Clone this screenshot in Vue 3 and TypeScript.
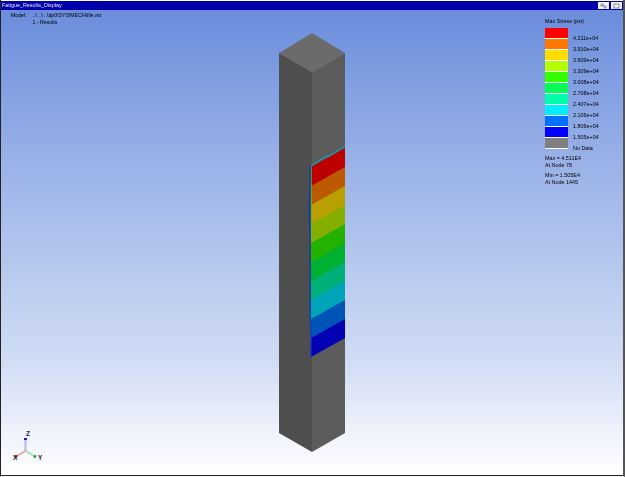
<template>
  <div class="window">
    <div class="titlebar">
      <span class="title">Fatigue_Results_Display</span>
      <div class="title-buttons">
        <button class="win-btn">
          <svg width="9" height="6" viewBox="0 0 9 6"><path d="M2 1h2v2H2zM5 3h2v2H5zM4 2l1 1" fill="none" stroke="#778" stroke-width="0.8" /></svg>
        </button>
        <button class="win-btn">
          <svg width="9" height="6" viewBox="0 0 9 6"><rect x="2" y="1" width="5" height="4" fill="none" stroke="#778" stroke-width="0.8" /></svg>
        </button>
      </div>
    </div>

    <div class="viewport">
      <div class="model-info">
        <span>Model:</span>
        <div>
          <div>..\ ..\ ..\dp0\SYS\MECH\file.rst</div>
          <div>1 - Results</div>
        </div>
      </div>

      <svg class="scene" width="625" height="466" viewBox="0 10 625 466">
        <!-- column -->
        <polygon points="312,33 345,53 312,72 279,53" fill="#6b6b6b" />
        <polygon points="279,53 312,72 312,452 279,433" fill="#4e4e4e" />
        <polygon points="312,72 345,53 345,433 312,452" fill="#5c5c5c" />

        <!-- stress bands on the right face -->
        <polygon v-for="(band, i) in bands" :key="i" :points="bandPoints(i)" :fill="band" />

        <!-- rim along the cut edge -->
        <path d="M345 146 L329 156 L325 157 L311 166" fill="none" stroke="#0f9fb0" stroke-width="1.4" />
        <path d="M310 166 L310 190 L309 200 L310 240 L310 320 L311 330 L311 357" fill="none" stroke="#0a3cc0" stroke-width="1.2" />
        <path d="M311.5 167 L311.5 240" fill="none" stroke="#3cc83c" stroke-width="0.7" />

        <!-- axis triad -->
        <line x1="25.5" y1="451" x2="25.5" y2="440" stroke="#b4b4ec" stroke-width="2" />
        <line x1="25.5" y1="440" x2="25.5" y2="438" stroke="#1c1ccc" stroke-width="3" />
        <line x1="25.5" y1="451" x2="17" y2="456" stroke="#f0a0a0" stroke-width="1.5" />
        <line x1="17" y1="456" x2="15" y2="457" stroke="#d81c1c" stroke-width="3" />
        <line x1="25.5" y1="451" x2="34" y2="456" stroke="#a0e0a0" stroke-width="1.5" />
        <line x1="34" y1="456" x2="36" y2="457" stroke="#14a814" stroke-width="3" />
        <text x="26" y="436" class="axis-label">Z</text>
        <text x="13" y="460" class="axis-label">X</text>
        <text x="38" y="460" class="axis-label">Y</text>
      </svg>

      <div class="legend">
        <div class="legend-title">Max Stress (psi)</div>
        <div v-for="row in legendRows" :key="row.label" class="legend-row">
          <div class="swatch" :style="{ background: row.color }"></div>
          <span class="legend-value">{{ row.label }}</span>
        </div>
        <div class="stats first">
          <div>Max = 4.511E4</div>
          <div>At Node 78</div>
        </div>
        <div class="stats">
          <div>Min = 1.505E4</div>
          <div>At Node 1445</div>
        </div>
      </div>
    </div>
  </div>
</template>

<script setup lang="ts">
interface LegendRow {
  color: string;
  label: string;
}

const legendRows: LegendRow[] = [
  { color: '#ff0000', label: '4.211e+04' },
  { color: '#ff7800', label: '3.910e+04' },
  { color: '#ffdc00', label: '3.609e+04' },
  { color: '#b4ff00', label: '3.309e+04' },
  { color: '#32ff00', label: '3.008e+04' },
  { color: '#00ff55', label: '2.708e+04' },
  { color: '#00ffaa', label: '2.407e+04' },
  { color: '#00eeff', label: '2.106e+04' },
  { color: '#0070ff', label: '1.806e+04' },
  { color: '#0000ff', label: '1.505e+04' },
  { color: '#808080', label: 'No Data' },
];

const bands = [
  '#bc0000',
  '#bc5800',
  '#b8a000',
  '#84ae00',
  '#24b200',
  '#00b030',
  '#00b078',
  '#00a4b8',
  '#0054b8',
  '#0000b4',
];

// each band is a parallelogram rising to the right; all but the last run
// 1px under the next band so no seam shows between them
const bandPoints = (i: number) => {
  const h = 19;
  const top = 167 + i * h;
  const bottom = i < bands.length - 1 ? h + 1 : h;
  return `311,${top} 345,${top - 19} 345,${top - 19 + bottom} 311,${top + bottom}`;
};
</script>

<style scoped>
.window {
  width: 625px;
  height: 477px;
  box-sizing: border-box;
  display: flex;
  flex-direction: column;
  border-left: 1px solid #222;
  border-right: 2px solid #555;
  border-bottom: 1px solid #fff;
  padding-top: 1px;
  background: #fff;
  font-family: "Liberation Sans", Arial, sans-serif;
  overflow: hidden;
}
.titlebar {
  height: 9px;
  flex: none;
  display: flex;
  align-items: center;
  justify-content: space-between;
  background: #0000aa;
  padding: 0 1px 0 1px;
}
.title {
  font-size: 5.4px;
  color: #e4e4f4;
  line-height: 9px;
  filter: blur(0.25px);
}
.title-buttons {
  display: flex;
  gap: 2px;
}
.win-btn {
  width: 11px;
  height: 7px;
  padding: 0;
  border: none;
  background: #f0f0f0;
  display: flex;
  align-items: center;
  justify-content: center;
}
.viewport {
  flex: 1;
  position: relative;
  background: linear-gradient(180deg, #6a8ddc 0%, #9db4e8 35%, #d0dcf4 75%, #ffffff 100%);
  border-bottom: 1px solid #222;
  overflow: hidden;
}
.scene {
  position: absolute;
  left: -1px;
  top: 0;
}
.axis-label {
  font-size: 6.5px;
  font-weight: 700;
  fill: #222;
}
.model-info {
  position: absolute;
  left: 10px;
  top: 2px;
  display: flex;
  gap: 6px;
  font-size: 5.2px;
  line-height: 7px;
  color: #000;
  filter: blur(0.25px);
}
.legend {
  position: absolute;
  left: 544px;
  top: 8px;
  font-size: 5.4px;
  color: #000;
  filter: blur(0.2px);
}
.legend-title {
  height: 7px;
  line-height: 7px;
  margin-bottom: 3px;
}
.legend-row {
  display: flex;
  height: 11px;
  position: relative;
}
.swatch {
  width: 23px;
  height: 10px;
  border-bottom: 1px solid #fff;
}
.legend-value {
  position: absolute;
  left: 28px;
  top: 7px;
  line-height: 7px;
  white-space: nowrap;
}
.legend-row:last-of-type .legend-value {
  top: 10px;
  left: 27px;
}
.stats {
  line-height: 7px;
  margin-top: 3px;
}
.stats.first {
  margin-top: 6px;
}
</style>

<style>
html, body {
  margin: 0;
  padding: 0;
}
</style>
